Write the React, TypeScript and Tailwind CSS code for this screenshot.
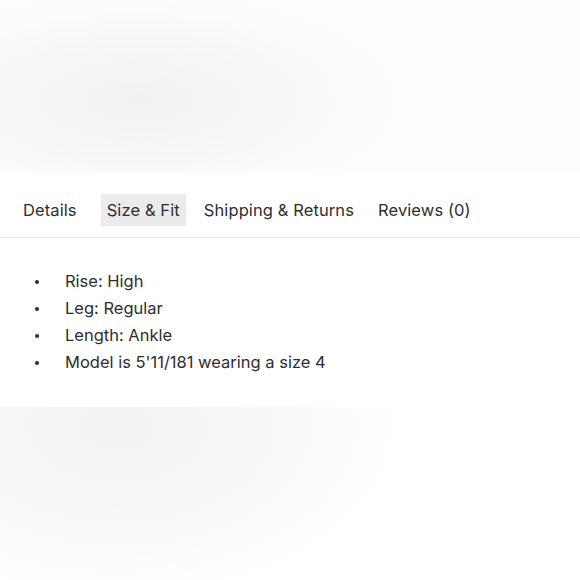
import React, { useState } from 'react';

const TABS = ['Details', 'Size & Fit', 'Shipping & Returns', 'Reviews (0)'];

const FIT_ITEMS = ['Rise: High', 'Leg: Regular', 'Length: Ankle', "Model is 5'11/181 wearing a size 4"];

export default function App() {
  const [active, setActive] = useState(1);

  return (
    <div className="w-[580px] h-[580px] flex flex-col bg-white text-[#2e2e2e] font-['Inter','Noto_Sans',sans-serif]">
      {/* soft product image fade above the panel */}
      <div className="h-[172px] shrink-0 bg-[radial-gradient(ellipse_260px_110px_at_140px_100px,#f1f1f1_0%,#f6f6f6_45%,#fbfbfb_80%,#fdfdfd_100%)]" />

      <div className="shrink-0 bg-white">
        <div className="flex items-center pt-[22px] pb-[11px] pl-[17px] border-b border-[#e6e6e6]">
          {TABS.map((tab, i) => (
            <button
              key={tab}
              onClick={() => setActive(i)}
              className={`h-[32px] px-[6px] text-[16.5px] leading-none tracking-[0.1px] ${i === 0 ? 'mr-[18px]' : 'mr-[12px]'} ${active === i ? 'bg-[#ebebeb]' : ''}`}
            >
              {tab}
            </button>
          ))}
        </div>

        <ul className="pt-[30px] pb-[31px]">
          {FIT_ITEMS.map(item => (
            <li key={item} className="flex items-center h-[27px] text-[16.5px]">
              <span className="ml-[35px] mr-[26px] w-[4px] h-[4px] rounded-full bg-[#2e2e2e]" />
              {item}
            </li>
          ))}
        </ul>
      </div>

      {/* fade below the panel */}
      <div className="flex-1 bg-[radial-gradient(ellipse_280px_170px_at_117px_20px,#f2f2f2_0%,#f6f6f6_40%,#fbfbfb_75%,#ffffff_100%)]" />
    </div>
  );
}
